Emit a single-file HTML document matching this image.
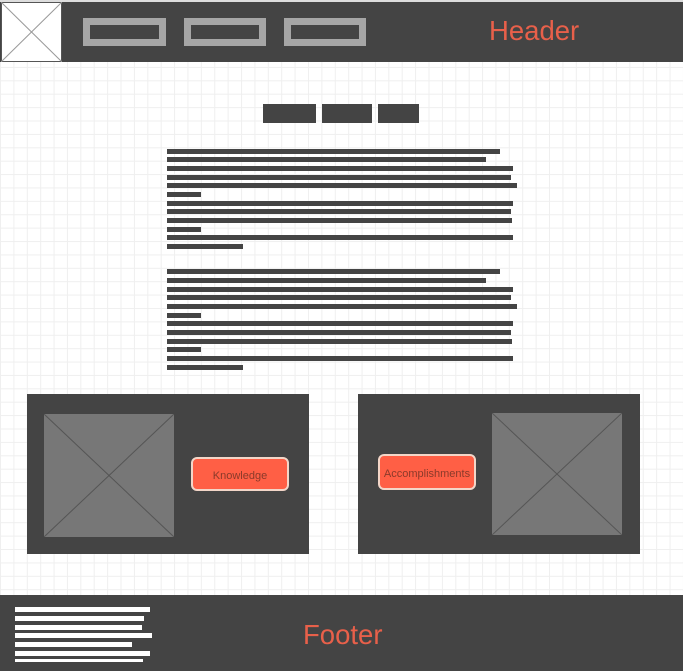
<!DOCTYPE html>
<html><head><meta charset="utf-8"><style>
*{margin:0;padding:0;box-sizing:border-box}
body{width:683px;height:671px;position:relative;overflow:hidden;font-family:"Liberation Sans",sans-serif;
background-color:#fff;
background-image:linear-gradient(#efefef 1px,transparent 1px),linear-gradient(90deg,#efefef 1px,transparent 1px);
background-size:13.4px 13.4px;}
.a{position:absolute}
.d{background:#444}
.nav{position:absolute;top:18px;height:28px;border:7px solid #a6a6a6;background:#444}
.l{position:absolute;left:167px;height:5px;background:#444}
.f{position:absolute;left:15px;height:5px;background:#fff}
.btn{position:absolute;background:#ff5f45;border:2px solid #f3d6c8;border-radius:6px;color:#8a3a2a;font-size:11px;display:flex;align-items:center;justify-content:center;padding-top:3px}
</style></head><body>
<div class="a" style="left:0;top:0;width:683px;height:2px;background:#ddd"></div>
<div class="a d" style="left:0;top:2px;width:683px;height:60px"></div>
<svg class="a" style="left:1px;top:2px" width="61" height="60"><rect x="0.5" y="0.5" width="60" height="59" fill="#fff" stroke="#555"/><line x1="0" y1="0" x2="61" y2="60" stroke="#999"/><line x1="61" y1="0" x2="0" y2="60" stroke="#999"/></svg>
<div class="nav" style="left:83px;width:83px"></div>
<div class="nav" style="left:184px;width:82px"></div>
<div class="nav" style="left:284px;width:82px"></div>
<div class="a" style="left:489px;top:15px;font-size:27.5px;color:#e8604a">Header</div>

<div class="a d" style="left:263px;top:104px;width:53px;height:19px"></div>
<div class="a d" style="left:322px;top:104px;width:50px;height:19px"></div>
<div class="a d" style="left:378px;top:104px;width:41px;height:19px"></div>

<div class="l" style="top:149px;width:333px"></div>
<div class="l" style="top:157px;width:319px"></div>
<div class="l" style="top:166px;width:346px"></div>
<div class="l" style="top:175px;width:344px"></div>
<div class="l" style="top:183px;width:350px"></div>
<div class="l" style="top:192px;width:34px"></div>
<div class="l" style="top:201px;width:346px"></div>
<div class="l" style="top:209px;width:344px"></div>
<div class="l" style="top:218px;width:345px"></div>
<div class="l" style="top:227px;width:34px"></div>
<div class="l" style="top:235px;width:346px"></div>
<div class="l" style="top:244px;width:76px"></div>

<div class="l" style="top:269px;width:333px"></div>
<div class="l" style="top:278px;width:319px"></div>
<div class="l" style="top:287px;width:346px"></div>
<div class="l" style="top:295px;width:344px"></div>
<div class="l" style="top:304px;width:350px"></div>
<div class="l" style="top:313px;width:34px"></div>
<div class="l" style="top:321px;width:346px"></div>
<div class="l" style="top:330px;width:344px"></div>
<div class="l" style="top:339px;width:345px"></div>
<div class="l" style="top:347px;width:34px"></div>
<div class="l" style="top:356px;width:346px"></div>
<div class="l" style="top:365px;width:76px"></div>

<div class="a d" style="left:27px;top:394px;width:282px;height:160px"></div>
<svg class="a" style="left:44px;top:414px" width="130" height="123"><rect width="130" height="123" fill="#777"/><line x1="0" y1="0" x2="130" y2="123" stroke="#555"/><line x1="130" y1="0" x2="0" y2="123" stroke="#555"/></svg>
<div class="btn" style="left:191px;top:457px;width:98px;height:34px">Knowledge</div>

<div class="a d" style="left:358px;top:394px;width:282px;height:160px"></div>
<svg class="a" style="left:492px;top:413px" width="130" height="122"><rect width="130" height="122" fill="#777"/><line x1="0" y1="0" x2="130" y2="122" stroke="#555"/><line x1="130" y1="0" x2="0" y2="122" stroke="#555"/></svg>
<div class="btn" style="left:378px;top:454px;width:98px;height:36px">Accomplishments</div>

<div class="a d" style="left:0;top:595px;width:683px;height:76px"></div>
<div class="f" style="top:607px;width:135px"></div>
<div class="f" style="top:616px;width:129px"></div>
<div class="f" style="top:625px;width:127px"></div>
<div class="f" style="top:633px;width:137px"></div>
<div class="f" style="top:642px;width:117px"></div>
<div class="f" style="top:651px;width:135px"></div>
<div class="f" style="top:659px;width:128px;height:3px"></div>
<div class="a" style="left:303px;top:619px;font-size:27.5px;color:#e8604a">Footer</div>
</body></html>
